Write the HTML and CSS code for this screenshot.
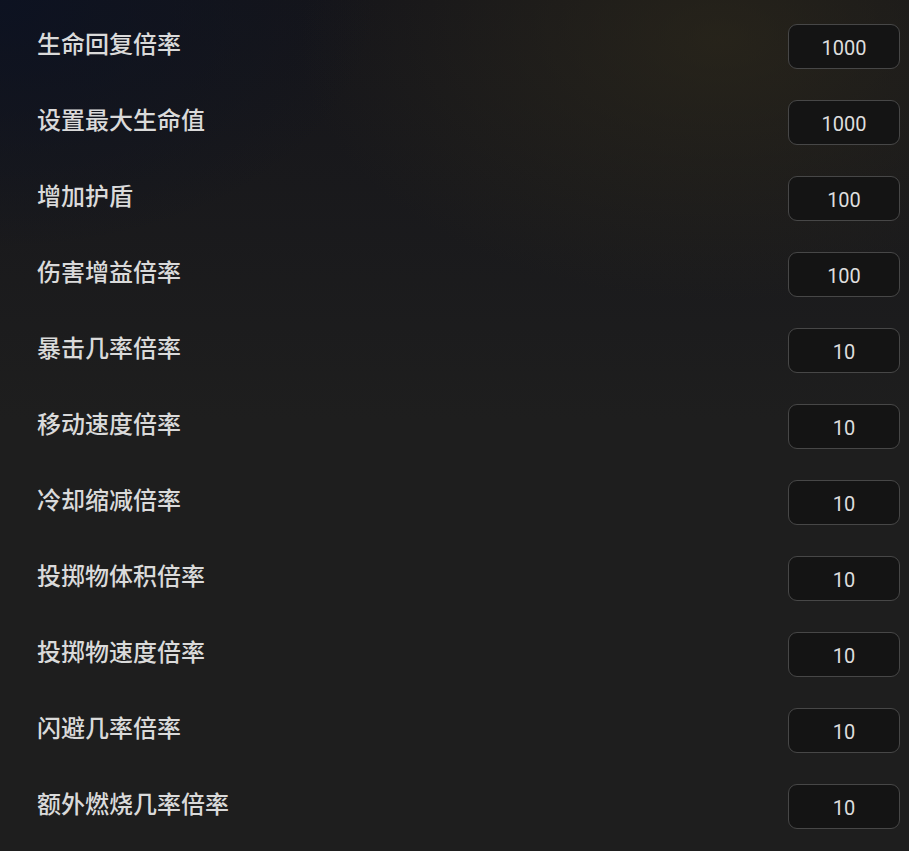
FILE: index.html
```html
<!DOCTYPE html>
<html lang="zh-CN">
<head>
  <meta charset="UTF-8">
  <meta name="viewport" content="width=device-width, initial-scale=1.0">
  <title>属性设置</title>
  <link rel="stylesheet" href="styles.css">
</head>
<body>
  <div class="settings">
    <div class="setting-row">
      <label for="regen">生命回复倍率</label>
      <input type="text" id="regen" class="value-input" value="1000">
    </div>
    <div class="setting-row">
      <label for="maxHp">设置最大生命值</label>
      <input type="text" id="maxHp" class="value-input" value="1000">
    </div>
    <div class="setting-row">
      <label for="shield">增加护盾</label>
      <input type="text" id="shield" class="value-input" value="100">
    </div>
    <div class="setting-row">
      <label for="damage">伤害增益倍率</label>
      <input type="text" id="damage" class="value-input" value="100">
    </div>
    <div class="setting-row">
      <label for="crit">暴击几率倍率</label>
      <input type="text" id="crit" class="value-input" value="10">
    </div>
    <div class="setting-row">
      <label for="speed">移动速度倍率</label>
      <input type="text" id="speed" class="value-input" value="10">
    </div>
    <div class="setting-row">
      <label for="cooldown">冷却缩减倍率</label>
      <input type="text" id="cooldown" class="value-input" value="10">
    </div>
    <div class="setting-row">
      <label for="projSize">投掷物体积倍率</label>
      <input type="text" id="projSize" class="value-input" value="10">
    </div>
    <div class="setting-row">
      <label for="projSpeed">投掷物速度倍率</label>
      <input type="text" id="projSpeed" class="value-input" value="10">
    </div>
    <div class="setting-row">
      <label for="dodge">闪避几率倍率</label>
      <input type="text" id="dodge" class="value-input" value="10">
    </div>
    <div class="setting-row">
      <label for="burn">额外燃烧几率倍率</label>
      <input type="text" id="burn" class="value-input" value="10">
    </div>
  </div>
</body>
</html>
```
FILE: styles.css
```css
html, body {
  margin: 0;
  padding: 0;
}
body {
  height: 851px;
  overflow: hidden;
  font-family: "Noto Sans CJK SC", "Noto Sans", sans-serif;
  color: #d9d9d9;
  background-color: #1e1e1e;
  background-image:
    radial-gradient(ellipse 420px 260px at 720px 40px, rgba(52, 46, 26, 0.55), rgba(52, 46, 26, 0) 100%),
    radial-gradient(ellipse 380px 250px at 0px 0px, rgba(12, 18, 34, 0.9), rgba(12, 18, 34, 0) 100%),
    linear-gradient(to bottom, #15151a 0px, #1e1e1e 420px);
}
.settings {
  padding: 8px 9px 0 37px;
}
.setting-row {
  display: flex;
  justify-content: space-between;
  align-items: center;
  height: 76px;
}
.setting-row label {
  font-size: 24px;
  font-weight: 500;
  color: #dadada;
  margin-top: -7px;
}
.value-input {
  width: 112px;
  height: 45px;
  box-sizing: border-box;
  background-color: #141414;
  border: 1.5px solid #474747;
  border-radius: 9px;
  color: #dedede;
  font-family: Roboto, "Noto Sans", sans-serif;
  font-size: 20px;
  text-align: center;
  padding: 3px 0 0;
  outline: none;
}
```
